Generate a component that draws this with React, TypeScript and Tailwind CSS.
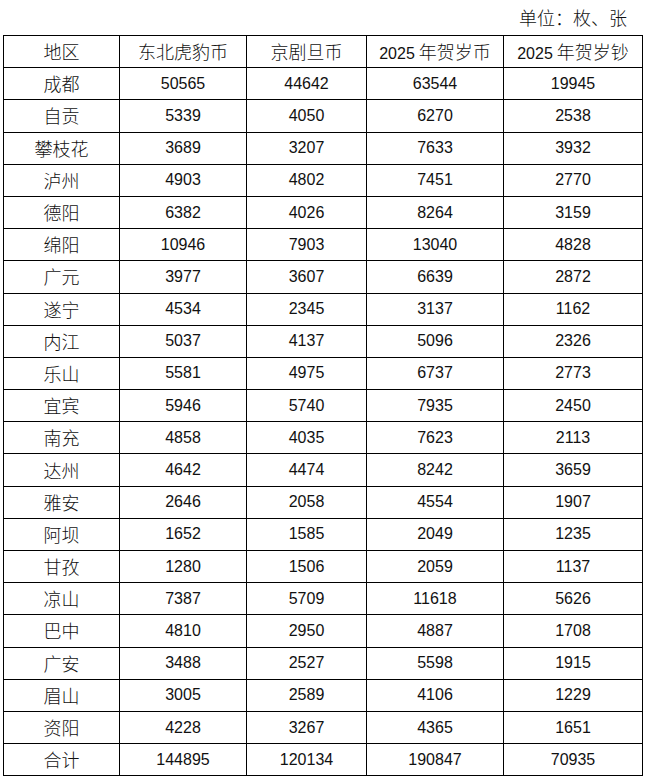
const rows: [string, number, number, number, number][] = [
  ["成都", 50565, 44642, 63544, 19945],
  ["自贡", 5339, 4050, 6270, 2538],
  ["攀枝花", 3689, 3207, 7633, 3932],
  ["泸州", 4903, 4802, 7451, 2770],
  ["德阳", 6382, 4026, 8264, 3159],
  ["绵阳", 10946, 7903, 13040, 4828],
  ["广元", 3977, 3607, 6639, 2872],
  ["遂宁", 4534, 2345, 3137, 1162],
  ["内江", 5037, 4137, 5096, 2326],
  ["乐山", 5581, 4975, 6737, 2773],
  ["宜宾", 5946, 5740, 7935, 2450],
  ["南充", 4858, 4035, 7623, 2113],
  ["达州", 4642, 4474, 8242, 3659],
  ["雅安", 2646, 2058, 4554, 1907],
  ["阿坝", 1652, 1585, 2049, 1235],
  ["甘孜", 1280, 1506, 2059, 1137],
  ["凉山", 7387, 5709, 11618, 5626],
  ["巴中", 4810, 2950, 4887, 1708],
  ["广安", 3488, 2527, 5598, 1915],
  ["眉山", 3005, 2589, 4106, 1229],
  ["资阳", 4228, 3267, 4365, 1651],
  ["合计", 144895, 120134, 190847, 70935],
];

const cjk = "font-['Noto_Sans_CJK_SC',sans-serif] text-[18px] font-light";
const num = "font-['Liberation_Sans',sans-serif] text-[16px]";
const cell = "border border-black text-center align-middle p-0 leading-none";

function Head({ text }: { text: string }) {
  const m = text.match(/^(\d+)\s(.*)$/);
  if (!m) return <span className={cjk}>{text}</span>;
  return (
    <>
      <span className={num + " text-[16.5px]"}>{m[1]}</span>
      <span className={cjk}> {m[2]}</span>
    </>
  );
}

export default function App() {
  const heads = ["地区", "东北虎豹币", "京剧旦币", "2025 年贺岁币", "2025 年贺岁钞"];
  return (
    <div className="w-[648px] h-[779px] bg-white text-[#111]">
      <div className="h-[35px] flex items-center justify-end pr-[21px]">
        <span className={cjk}>单位：枚、张</span>
      </div>
      <table className="ml-[3px] w-[639px] border-collapse table-fixed">
        <colgroup>
          <col className="w-[116px]" />
          <col className="w-[127px]" />
          <col className="w-[120px]" />
          <col className="w-[137px]" />
          <col className="w-[139px]" />
        </colgroup>
        <tbody>
          <tr className="h-[32.2px]">
            {heads.map((h) => (
              <td key={h} className={cell}>
                <Head text={h} />
              </td>
            ))}
          </tr>
          {rows.map((r) => (
            <tr key={r[0]} className="h-[32.2px]">
              <td className={cell}>
                <span className={cjk}>{r[0]}</span>
              </td>
              {r.slice(1).map((v, i) => (
                <td key={i} className={cell + " " + num}>
                  {v}
                </td>
              ))}
            </tr>
          ))}
        </tbody>
      </table>
    </div>
  );
}
